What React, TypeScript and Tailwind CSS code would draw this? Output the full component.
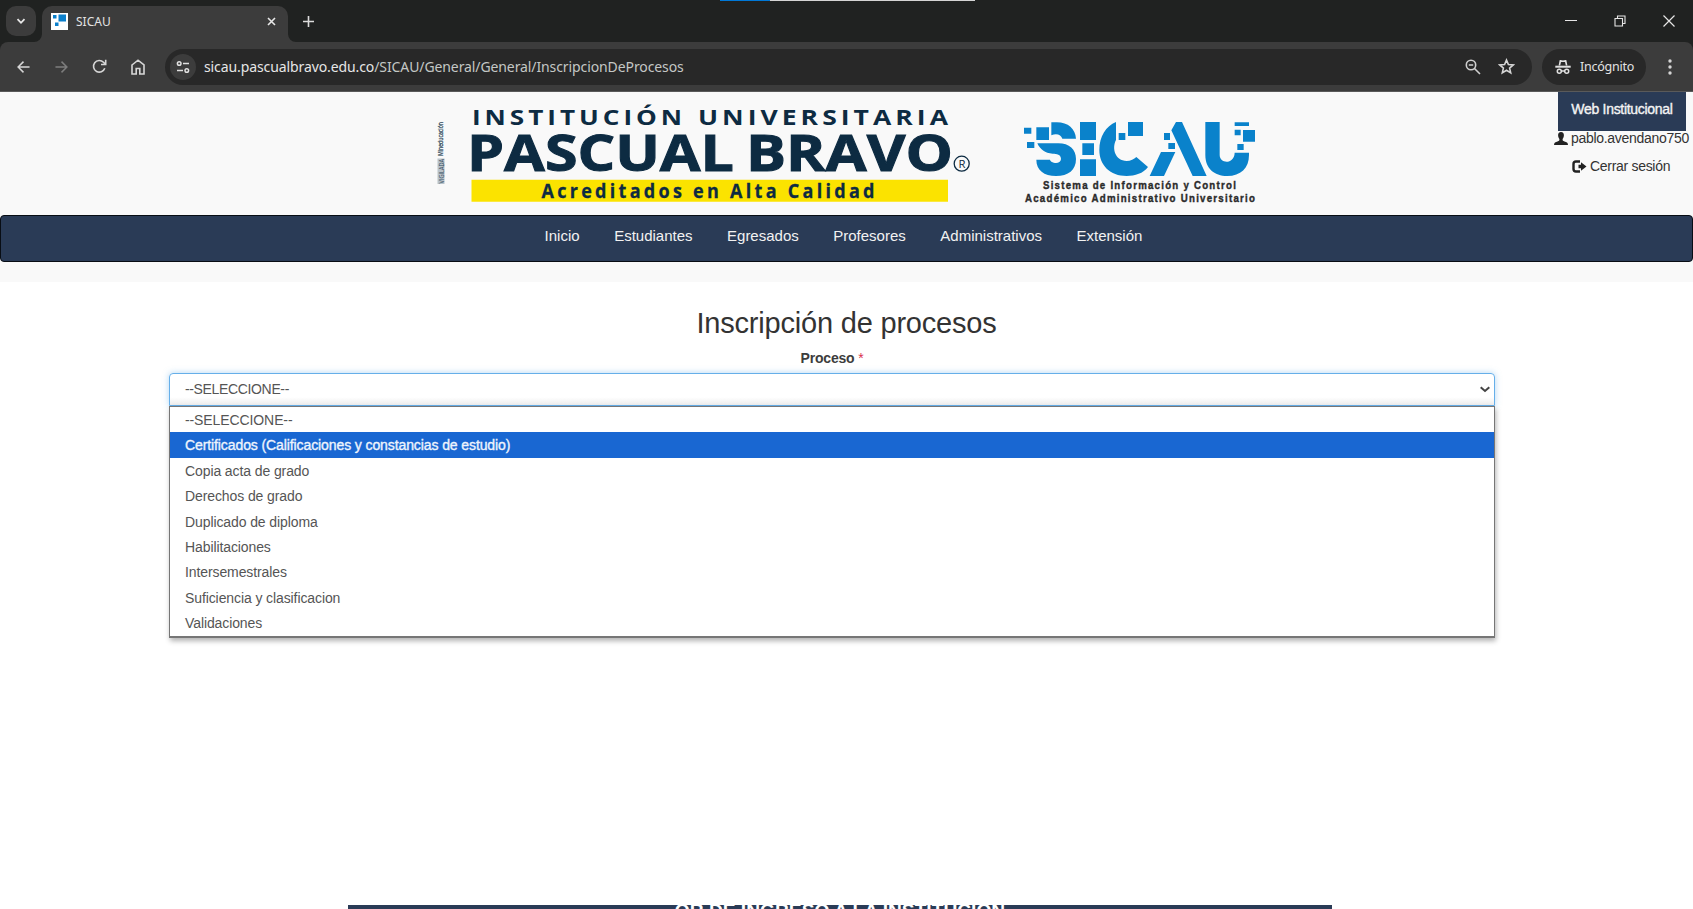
import React from 'react';

const options = [
  '--SELECCIONE--',
  'Certificados (Calificaciones y constancias de estudio)',
  'Copia acta de grado',
  'Derechos de grado',
  'Duplicado de diploma',
  'Habilitaciones',
  'Intersemestrales',
  'Suficiencia y clasificacion',
  'Validaciones',
];

const navItems = ['Inicio', 'Estudiantes', 'Egresados', 'Profesores', 'Administrativos', 'Extensión'];

function TabStrip() {
  return (
    <div className="relative flex h-[42px] items-start bg-[#202221] pt-1.5 pl-1.5">
      <div className="absolute top-0 left-[720px] flex h-px w-[255px] bg-[#d5d5d5]">
        <div className="w-[50px] bg-[#0078d7]" />
      </div>
      <button className="flex size-[30px] items-center justify-center rounded-[10px] bg-[#3c3c3c]">
        <svg width="10" height="7" viewBox="0 0 10 7" fill="none" stroke="#e8e8e8" strokeWidth="1.800">
          <path d="M1.500 1.200 5 4.800 8.500 1.200" />
        </svg>
      </button>
      <div className="relative ml-1.5 flex h-9 w-[246px] items-center rounded-t-[10px] bg-[#3c3c3c] pr-[12px] pb-[5px] pl-[9px]">
        <svg className="absolute bottom-0 -left-2" width="8" height="8"><path d="M8 0V8H0A8 8 0 0 0 8 0Z" fill="#3c3c3c" /></svg>
        <svg className="absolute -right-2 bottom-0" width="8" height="8"><path d="M0 0V8H8A8 8 0 0 1 0 0Z" fill="#3c3c3c" /></svg>
        <svg width="17" height="17" viewBox="0 0 17 17">
          <path d="M0 0H17V17H0Z" fill="#fff" />
          <path d="M2 2H5.500V5.500H2ZM7.500 1.500H15V8.500H7.500ZM4 9.500H7.500V13H4Z" fill="#0a7fcb" />
        </svg>
        <span className="ml-2 text-[12px] leading-4 text-[#e3e3e3]">SICAU</span>
        <svg className="ml-auto" width="9" height="9" viewBox="0 0 9 9" stroke="#e8e8e8" strokeWidth="1.600"><path d="M1 1 8 8M8 1 1 8" /></svg>
      </div>
      <svg className="mt-[10px] ml-[15px]" width="11" height="11" viewBox="0 0 11 11" stroke="#dcdcdc" strokeWidth="1.600"><path d="M5.500 0V11M0 5.500H11" /></svg>
      <div className="mt-[9px] mr-[18px] ml-auto flex items-center gap-[37px]">
        <svg width="12" height="12" stroke="#e6e6e6"><path d="M0 5.500H12" /></svg>
        <svg width="12" height="12" viewBox="0 0 12 12" fill="none" stroke="#e6e6e6" strokeWidth="1.100"><path d="M1 3.500H8.500V11H1ZM3.500 3.500V1H11V8.500H8.500" /></svg>
        <svg width="12" height="12" viewBox="0 0 12 12" stroke="#e6e6e6" strokeWidth="1.200"><path d="M.5.5l11 11M11.500.5l-11 11" /></svg>
      </div>
    </div>
  );
}

function Toolbar() {
  return (
    <div className="bg-[#202221]">
      <div className="flex h-[50px] items-center rounded-t-lg border-b border-[#5a5a5a] bg-[#3c3c3c] pl-[17px] text-[#d0d0d0]">
        <svg width="13" height="14" viewBox="0 0 14 14" fill="none" stroke="#d6d6d6" strokeWidth="1.600"><path d="M13.500 7H1.500M7 1.200 1.200 7 7 12.800" /></svg>
        <svg className="ml-[25px]" width="13" height="14" viewBox="0 0 14 14" fill="none" stroke="#7d7d7d" strokeWidth="1.600"><path d="M.5 7H12.500M7 1.200 12.800 7 7 12.800" /></svg>
        <svg className="ml-6" width="15" height="15" viewBox="0 0 15 15" fill="none" stroke="#d6d6d6" strokeWidth="1.600">
          <path d="M12.800 9.300A5.800 5.800 0 1 1 11.500 3.300L13.400 5.200M13.700.8V5.500H9" />
        </svg>
        <svg className="ml-6" width="14" height="16" viewBox="0 0 14 16" fill="none" stroke="#d6d6d6" strokeWidth="1.600">
          <path d="M1 6 7 1.200 13 6V15H8.800V9.500H5.200V15H1Z" />
        </svg>
        <div className="ml-5 flex h-9 w-[1367px] items-center rounded-full bg-[#282828] pr-[17px] pl-[5px]">
          <span className="flex size-[26px] items-center justify-center rounded-full bg-[#3c3c3c]">
            <svg width="14" height="14" viewBox="0 0 14 14" fill="none" stroke="#e0e0e0" strokeWidth="1.500">
              <circle cx="3.200" cy="3.500" r="1.800" /><path d="M7 3.500H13M1 10.500H7" /><circle cx="10.800" cy="10.500" r="1.800" />
            </svg>
          </span>
          <span className="ml-2 text-[14px] tracking-[-0.1px] whitespace-nowrap text-[#c4c7c5]">
            <span className="text-[#e6e6e6]">sicau.pascualbravo.edu.co</span>/SICAU/General/General/InscripcionDeProcesos
          </span>
          <svg className="ml-auto" width="16" height="16" viewBox="0 0 16 16" fill="none" stroke="#cfcfcf" strokeWidth="1.600">
            <circle cx="6" cy="6" r="4.700" /><path d="M9.500 9.500 15 15M3.800 6H8.200" />
          </svg>
          <svg className="ml-[17px]" width="17" height="17" viewBox="0 0 17 17" fill="none" stroke="#d6d6d6" strokeWidth="1.600">
            <path d="M8.500 2 10.400 6.500 15.300 6.900 11.600 10.100 12.700 14.900 8.500 12.300 4.300 14.900 5.400 10.100 1.700 6.900 6.600 6.500Z" />
          </svg>
        </div>
        <div className="ml-[10px] flex h-9 w-[104px] items-center rounded-full bg-[#282828] pl-[13px]">
          <svg className="shrink-0" width="16" height="16" viewBox="0 0 16 16" stroke="#e0e0e0" fill="none">
            <path d="M3.600 6.500 4.600 1.200C5.800.6 6.800 1.600 8 1.600S10.200.6 11.400 1.200L12.400 6.500H10.800L10 3H6L5.200 6.500Z" fill="#e0e0e0" stroke="none" />
            <path d="M.3 7.700H15.700" strokeWidth="2" />
            <circle cx="4.300" cy="12.300" r="2" strokeWidth="1.500" /><circle cx="11.700" cy="12.300" r="2" strokeWidth="1.500" /><path d="M6 12H10" strokeWidth="1.500" />
          </svg>
          <span className="mt-px ml-[9px] text-[12.500px] tracking-[-0.25px] text-[#e3e3e3]">Incógnito</span>
        </div>
        <svg className="ml-[22px]" width="4" height="16" fill="#d6d6d6"><circle cx="2" cy="2" r="1.700" /><circle cx="2" cy="8" r="1.700" /><circle cx="2" cy="14" r="1.700" /></svg>
      </div>
    </div>
  );
}

function UniversityLogo() {
  return (
    <svg className="shrink-0" width="540" height="110" viewBox="436 98 540 110" fill="#0d2b42" fontFamily="'Open Sans', sans-serif" fontWeight="700">
      <g transform="translate(443.500 184) rotate(-90)" fontWeight="400" fontSize="7" fill="#2f4a5c">
        <path d="M0-6H25.500V1H0Z" fill="#b9c2c9" />
        <text x="0.500" y="0" textLength="24.500" lengthAdjust="spacingAndGlyphs">VIGILADA</text>
        <text x="28" y="-0.500" textLength="34" lengthAdjust="spacingAndGlyphs" stroke="#2f4a5c" strokeWidth="0.300">Mineducación</text>
      </g>
      <g fontSize="21.700" letterSpacing="3.300">
        <text x="472" y="125" textLength="214" lengthAdjust="spacingAndGlyphs">INSTITUCIÓN</text>
        <text x="698" y="125" textLength="254" lengthAdjust="spacingAndGlyphs">UNIVERSITARIA</text>
      </g>
      <g fontSize="50" stroke="#0d2b42" strokeWidth="1">
        <text x="467" y="171.300" textLength="267" lengthAdjust="spacingAndGlyphs">PASCUAL</text>
        <text x="746" y="171.300" textLength="207" lengthAdjust="spacingAndGlyphs">BRAVO</text>
      </g>
      <circle cx="961.700" cy="163.700" r="7.500" fill="none" stroke="#0d2b42" strokeWidth="1.300" />
      <text x="958.500" y="168" fontSize="11.500" fontWeight="400" textLength="7" lengthAdjust="spacingAndGlyphs">R</text>
      <path d="M471.500 179.700H948V201.700H471.500Z" fill="#fbe300" />
      <g transform="translate(541.500 197.700) scale(0.9 1)">
        <text fontSize="20" textLength="370" lengthAdjust="spacing" stroke="#0d2b42" strokeWidth="0.300">Acreditados en Alta Calidad</text>
      </g>
    </svg>
  );
}

function SicauLogo() {
  return (
    <svg className="shrink-0" width="236" height="90" viewBox="66 84 708 270">
      <g fill="#0a82cb">
        <path d="M72 113H94V131H72ZM81 156H103V174H81ZM109 112H147V150H109ZM240 96H288V150H240ZM247 160H282V195H247ZM240 208H288V258H240ZM356 129H376V150H356ZM384 96H429V138H384ZM492 129H510V150H492ZM505 159H525V177H505ZM704 97H747V108H704ZM704 119H722V136H704ZM729 120H765V155H729ZM712 162H731V180H712Z" />
        <path d="M154 97H170C205 97 226 117 228 146H187C184 135 170 128 154 136Z" />
        <path d="M112 160H175C208 160 228 178 228 207C228 240 205 258 168 258C132 258 109 240 109 209H150C152 220 182 225 183 207C183 192 170 192 158 191C135 190 120 178 112 160Z" />
        <path d="M348 96V150C335 175 345 212 380 213C392 213 402 208 409 201L444 231C430 250 405 258 380 258C330 258 298 225 298 180C298 140 318 108 348 96Z" />
        <path d="M528 96H546L620 258H578L514 121ZM483 186H526L492 258H449Z" />
        <path d="M616 96H659V195C659 222 703 224 704 188H747V195C747 235 722 258 682 258C642 258 616 235 616 195Z" />
      </g>
      <g fill="#2b2b2b" stroke="#2b2b2b" strokeWidth="1.200" fontFamily="'Liberation Sans', sans-serif" fontWeight="700" fontSize="35">
        <g transform="translate(129 297) scale(0.83 1)">
          <text textLength="697" lengthAdjust="spacing">Sistema de Información y Control</text>
        </g>
        <g transform="translate(75 336) scale(0.83 1)">
          <text textLength="831" lengthAdjust="spacing">Académico Administrativo Universitario</text>
        </g>
      </g>
    </svg>
  );
}

function Header() {
  return (
    <header className="flex h-[123px] items-start bg-[#f9f9f9] pl-[436px]">
      <div className="flex pt-[6px]">
        <UniversityLogo />
        <div className="ml-[46px] pt-5"><SicauLogo /></div>
      </div>
      <div className="ml-auto flex w-[139px] flex-col whitespace-nowrap text-[#333]">
        <a className="ml-1 h-[39px] w-32 bg-[#2a3b56] pt-[7px] text-center text-[14px] leading-5 tracking-[-0.3px] text-[#f4f4f4] [-webkit-text-stroke:0.35px_#f4f4f4]">Web Institucional</a>
        <div className="flex h-[15px] items-center">
          <svg className="shrink-0" width="14" height="13" viewBox="0 0 14 13" fill="#222"><path d="M7 0C9 0 10 1.500 9.900 3.500C9.800 5.300 9 6.300 8.600 7C8.500 8.500 9 9 10.500 9.500C12.500 10.200 14 10.500 14 13H0C0 10.500 1.500 10.200 3.500 9.500C5 9 5.500 8.500 5.400 7C5 6.300 4.200 5.300 4.100 3.500C4 1.500 5 0 7 0Z" /></svg>
          <span className="ml-[3px] text-[14px] tracking-[-0.3px]">pablo.avendano750</span>
        </div>
        <div className="mt-3 ml-[18px] flex h-[17px] items-center">
          <svg width="15" height="13" viewBox="0 0 15 13"><path d="M8 1.500H4C2.300 1.500 1.500 2.300 1.500 4V9C1.500 10.700 2.300 11.500 4 11.500H8" fill="none" stroke="#222" strokeWidth="2.400" /><path d="M6.500 4.800H9V2.300L14.500 6.500 9 10.700V8.200H6.500Z" fill="#222" /></svg>
          <span className="ml-[3px] text-[14px] tracking-[-0.3px]">Cerrar sesión</span>
        </div>
      </div>
    </header>
  );
}

function ProcessForm() {
  return (
    <main className="flex h-[623px] flex-col pt-[23px]">
      <h1 className="text-center text-[29px] leading-9 tracking-[-0.2px] text-[#333]">Inscripción de procesos</h1>
      <div className="mr-[198px] ml-[169px] flex flex-col items-center">
        <label className="mt-[7px] h-[25px] text-[14px] leading-5 font-bold tracking-[-0.2px] text-[#3c3c3c]">
          Proceso <span className="font-normal text-[#d9304f]">*</span>
        </label>
        <div className="flex h-[33px] w-full items-center rounded-t border border-[#66afe9] bg-linear-to-b from-white from-75% to-[#ececec] pr-[4px] pl-[15px] shadow-[0_0_6px_rgba(102,175,233,0.5)]">
          <span className="text-[14px] tracking-[-0.35px] text-[#555]">--SELECCIONE--</span>
          <svg className="ml-auto" width="10" height="7" viewBox="0 0 10 7" fill="none" stroke="#444" strokeWidth="2"><path d="M.7 1.200 5 5 9.300 1.200" /></svg>
        </div>
        <ul className="w-full border border-b-2 border-[#767676] bg-white text-[14px] tracking-[-0.1px] shadow-[1px_3px_5px_rgba(0,0,0,0.3)]">
          {options.map((label, i) => (
            <li key={label} className={i === 1 ? 'h-[25.4px] bg-[#1967d2] pl-[15px] leading-[26px] text-[#eef4fd] [-webkit-text-stroke:0.35px_#eef4fd]' : 'h-[25.4px] pl-[15px] leading-[26px] text-[#555]'}>
              {label}
            </li>
          ))}
        </ul>
      </div>
    </main>
  );
}

export default function App() {
  return (
    <div className="h-[909px] w-[1693px] overflow-hidden bg-white font-['Liberation_Sans',sans-serif]">
      <div className="font-['Noto_Sans',sans-serif]">
        <TabStrip />
        <Toolbar />
      </div>
      <Header />
      <div className="h-[67px] bg-[#f9f9f9]">
        <nav className="flex h-[47px] justify-center gap-[34.500px] rounded border border-[#080d14] bg-[#2a3b56] pt-[9px] pr-[6px] text-[15px] leading-[22px] text-[#f2f2f2]">
          {navItems.map((item) => <a key={item}>{item}</a>)}
        </nav>
      </div>
      <ProcessForm />
      <footer className="mr-[361px] ml-[348px] flex h-1 justify-center overflow-hidden bg-[#2a3b56]">
        <span className="-mt-[4px] text-[19.200px] leading-5 font-bold whitespace-nowrap text-white">OR DE INGRESO A LA INSTITUCION</span>
      </footer>
    </div>
  );
}
